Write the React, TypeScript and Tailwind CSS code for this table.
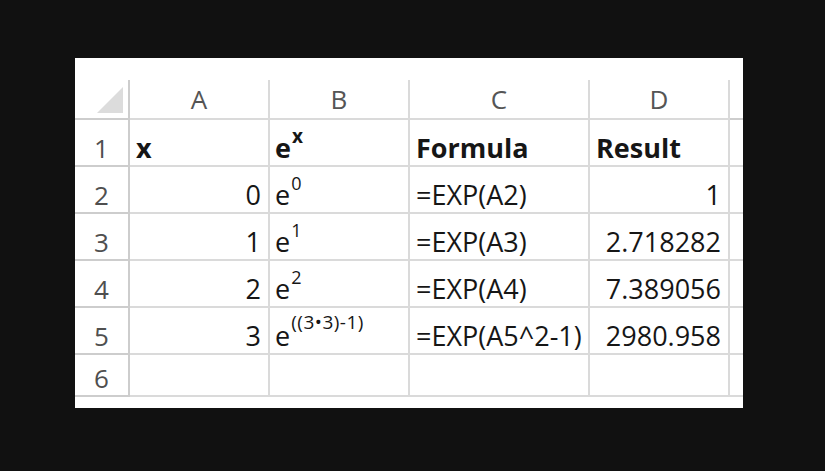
import React from "react";

type Row = {
  n: number;
  a: string;
  base?: string;
  sup?: string;
  supCls?: string;
  c: string;
  d: string;
  bold?: boolean;
};

const rows: Row[] = [
  { n: 1, a: "x", base: "e", sup: "x", supCls: "-top-[15px] text-[19px]", c: "Formula", d: "Result", bold: true },
  { n: 2, a: "0", base: "e", sup: "0", supCls: "-top-[15px] text-[18px]", c: "=EXP(A2)", d: "1" },
  { n: 3, a: "1", base: "e", sup: "1", supCls: "-top-[15px] text-[18px]", c: "=EXP(A3)", d: "2.718282" },
  { n: 4, a: "2", base: "e", sup: "2", supCls: "-top-[15px] text-[18px]", c: "=EXP(A4)", d: "7.389056" },
  { n: 5, a: "3", base: "e", sup: "((3•3)-1)", supCls: "-top-[17px] text-[19px] tracking-[0.5px]", c: "=EXP(A5^2-1)", d: "2980.958" },
  { n: 6, a: "", c: "", d: "" },
];

const line = "border-[#dadada]";
const headLine = "border-[#cdcdcd]";

function HeadCell({ label, last }: { label?: string; last?: boolean }) {
  return (
    <div
      className={`flex items-end justify-center pb-[6px] border-b-2 ${headLine} ${last ? "" : `border-r-2 ${line}`} text-[26px] leading-none text-[#555555]`}
    >
      {label}
    </div>
  );
}

export default function App() {
  return (
    <div
      className="w-full h-[471px] bg-[#111111] pt-[58px] pl-[75px]"
      style={{ fontFamily: '"Open Sans", "Noto Sans", sans-serif' }}
    >
      <div className="w-[668px] h-[350px] bg-white pt-[22px]">
        <div className="grid grid-cols-[55px_140px_140px_180px_140px_13px] grid-rows-[40px_repeat(5,47px)_42px]">
          {/* corner */}
          <div className={`flex items-end justify-end pr-[5px] pb-[5px] border-b-2 border-r-2 ${headLine}`}>
            <svg width="26" height="26" viewBox="0 0 26 26">
              <polygon points="26,0 26,26 0,26" fill="#dcdcdc" />
            </svg>
          </div>
          <HeadCell label="A" />
          <HeadCell label="B" />
          <HeadCell label="C" />
          <HeadCell label="D" />
          <HeadCell last />

          {rows.map((r) => {
            const w = r.bold ? "font-bold" : "font-normal";
            return (
              <React.Fragment key={r.n}>
                <div
                  className={`flex items-end justify-center pb-[4px] border-b-2 border-r-2 ${headLine} text-[26px] leading-none text-[#4f4f4f]`}
                >
                  {r.n}
                </div>
                <div
                  className={`flex items-end ${r.bold ? "justify-start pl-[6px]" : "justify-end pr-[7px]"} pb-[4px] border-b-2 border-r-2 ${line} text-[27px] leading-none text-[#161616] ${w}`}
                >
                  {r.a}
                </div>
                <div
                  className={`flex items-end pl-[5px] pb-[4px] border-b-2 border-r-2 ${line} text-[27px] leading-none text-[#161616] ${w}`}
                >
                  {r.base && (
                    <span>
                      {r.base}
                      <sup className={`${r.supCls} ml-[1px] ${w}`}>{r.sup}</sup>
                    </span>
                  )}
                </div>
                <div
                  className={`flex items-end pl-[6px] pb-[4px] border-b-2 border-r-2 ${line} text-[27px] leading-none text-[#161616] whitespace-nowrap ${w}`}
                >
                  {r.c}
                </div>
                <div
                  className={`flex items-end ${r.bold ? "justify-start pl-[6px]" : "justify-end pr-[7px]"} pb-[4px] border-b-2 border-r-2 ${line} text-[27px] leading-none text-[#161616] ${w}`}
                >
                  {r.d}
                </div>
                <div className={`border-b-2 ${line}`} />
              </React.Fragment>
            );
          })}
        </div>
      </div>
    </div>
  );
}
